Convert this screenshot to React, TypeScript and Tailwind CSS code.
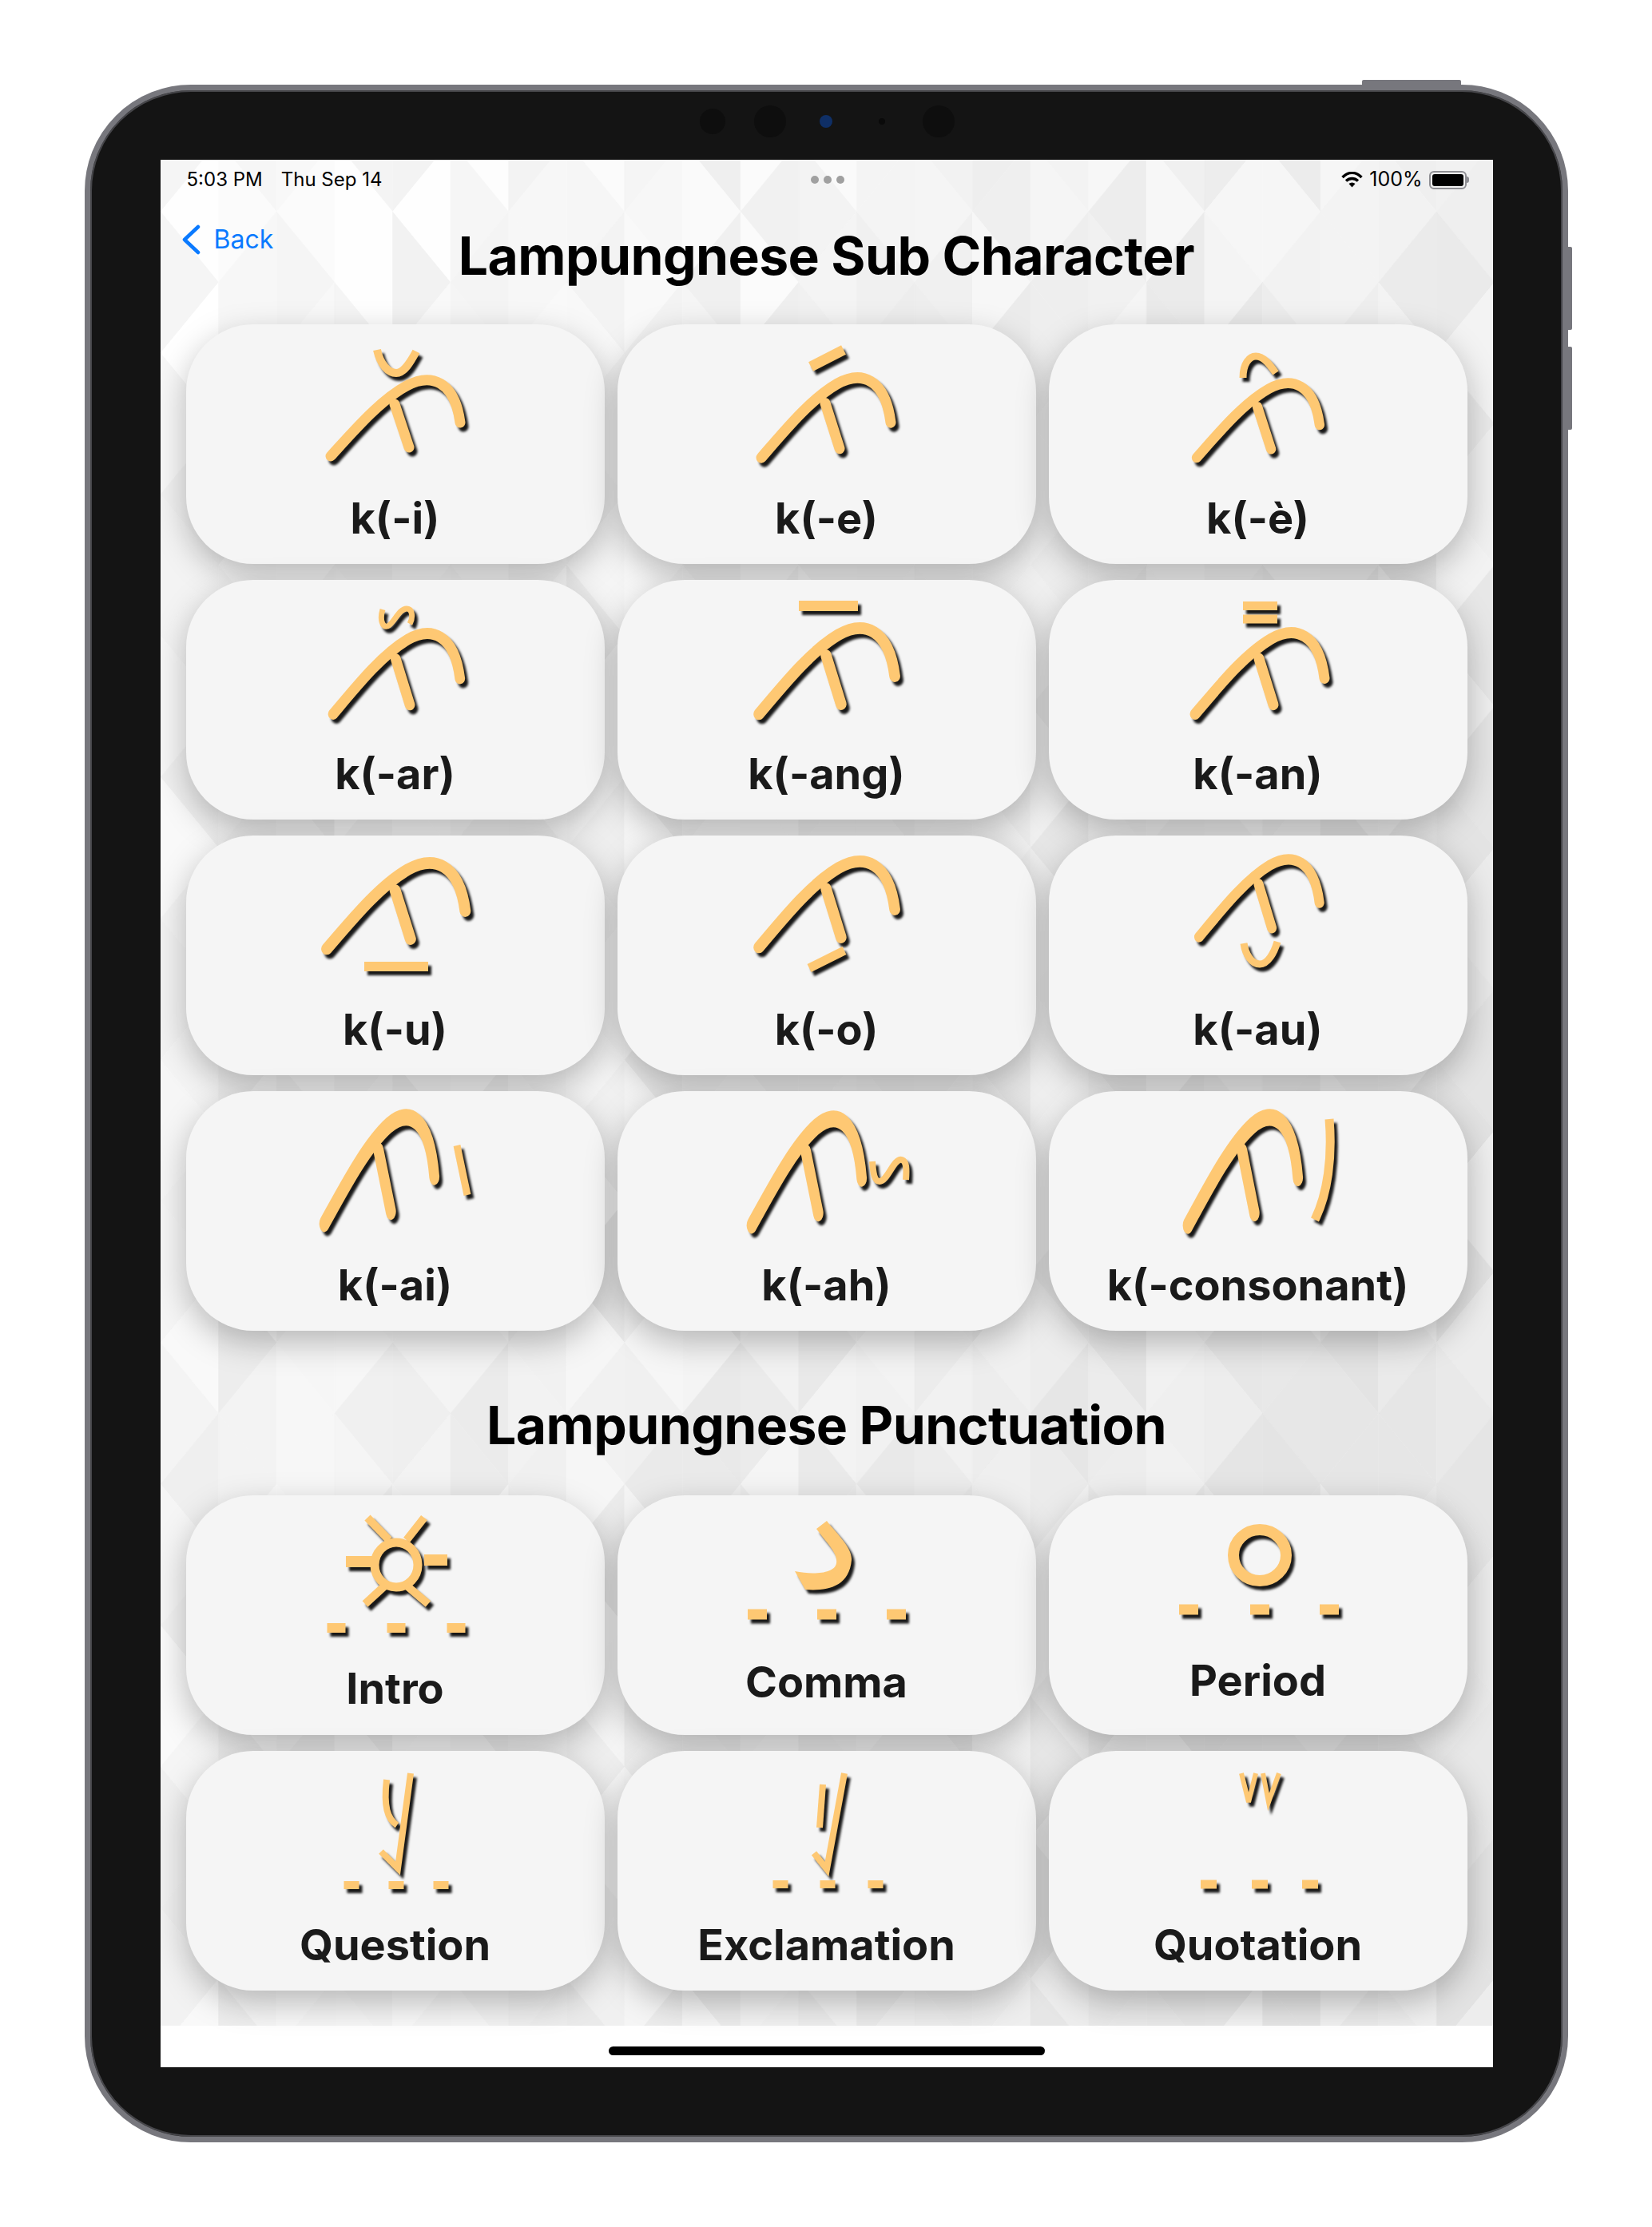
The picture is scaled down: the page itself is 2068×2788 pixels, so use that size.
import type { ReactNode } from 'react';

const INK = '#fec873';

// Low-poly wallpaper: a lattice of diamonds, each split down its middle
function hash(a: number, b: number) {
  const s = Math.sin(a * 127.1 + b * 311.7) * 43758.5453;
  return s - Math.floor(s);
}

function Wallpaper() {
  const w = 72.6;
  const h = 88.5;
  const tris: { points: string; fill: string }[] = [];
  for (let j = -2; j < 30; j++) {
    for (let i = -1; i < 25; i++) {
      if ((i + j + 200) % 2 === 0) continue;
      const cx = i * w;
      const cy = 65 + j * h;
      [-1, 1].forEach((side) => {
        const shade =
          251 - 12 * (cx / 1668) - 7 * Math.min(1, Math.max(0, cy / 900)) + (hash(i + side * 0.3, j) - 0.5) * 13;
        const v = Math.min(255, Math.round(shade));
        tris.push({
          points: `${cx},${cy - h} ${cx + side * w},${cy} ${cx},${cy + h}`,
          fill: `rgb(${v},${v},${v})`,
        });
      });
    }
  }
  return (
    <svg className="absolute inset-0 w-full h-full" viewBox="0 0 1668 2336" preserveAspectRatio="none">
      {tris.map((t, n) => (
        <polygon key={n} points={t.points} fill={t.fill} stroke={t.fill} strokeWidth="0.5" />
      ))}
    </svg>
  );
}

// Base letter "ka"; marks are passed in relative to the start of its long stroke
function Ka({ x, y, sx, sy, weight = 13, children }: { x: number; y: number; sx: number; sy: number; weight?: number; children?: ReactNode }) {
  return (
    <g transform={`translate(${x} ${y})`}>
      <g transform={`scale(${sx} ${sy})`} strokeWidth={weight} strokeLinecap="round">
        <path d="M0 0 C30 -33 62 -70 95 -88 C125 -104 155 -95 162 -42" />
        <path d="M80 -65 L98 -11" />
      </g>
      {children}
    </g>
  );
}

function Dots({ xs, y, w, h }: { xs: number[]; y: number; w: number; h: number }) {
  return (
    <g fill={INK} stroke="none">
      {xs.map((x) => (
        <rect key={x} x={x - w / 2} y={y - h / 2} width={w} height={h} />
      ))}
    </g>
  );
}

const letters: { label: string; glyph: ReactNode }[] = [
  {
    label: 'k(-i)',
    glyph: (
      <Ka x={181} y={165} sx={1} sy={1}>
        <path d="M58 -133 C62 -115 72 -104 82 -104 C92 -104 100 -118 107 -131" strokeWidth="10" />
      </Ka>
    ),
  },
  {
    label: 'k(-e)',
    glyph: (
      <Ka x={180} y={167} sx={1} sy={1.05}>
        <path d="M62 -114 L103 -135" strokeWidth="13" />
      </Ka>
    ),
  },
  {
    label: 'k(-è)',
    glyph: (
      <Ka x={185} y={167} sx={0.95} sy={0.98}>
        <path d="M58 -100 C58 -118 66 -127 74 -127 C84 -127 92 -116 99 -106" strokeWidth="9" />
      </Ka>
    ),
  },
  {
    label: 'k(-ar)',
    glyph: (
      <Ka x={184} y={168} sx={0.98} sy={1.06}>
        <path d="M62 -131 C58 -118 62 -108 68 -110 C76 -113 82 -132 92 -132 C100 -132 100 -120 96 -113" strokeWidth="7" />
      </Ka>
    ),
  },
  {
    label: 'k(-ang)',
    glyph: (
      <Ka x={177} y={168} sx={1.05} sy={1.13}>
        <path d="M50 -135.5 H124" strokeWidth="13" />
      </Ka>
    ),
  },
  {
    label: 'k(-an)',
    glyph: (
      <Ka x={183} y={168} sx={1} sy={1.07}>
        <path d="M60 -135.5 H103 M60 -119 H103" strokeWidth="11" />
      </Ka>
    ),
  },
  {
    label: 'k(-u)',
    glyph: (
      <Ka x={176} y={142} sx={1.07} sy={1.13}>
        <path d="M47 22 H127" strokeWidth="12" />
      </Ka>
    ),
  },
  {
    label: 'k(-o)',
    glyph: (
      <Ka x={177} y={140} sx={1.05} sy={1.13}>
        <path d="M63 26 L107 4" strokeWidth="11" />
      </Ka>
    ),
  },
  {
    label: 'k(-au)',
    glyph: (
      <Ka x={188} y={127} sx={0.93} sy={1.02}>
        <path d="M56 8 C58 22 66 34 76 34 C86 34 94 20 98 6" strokeWidth="9" />
      </Ka>
    ),
  },
  {
    label: 'k(-ai)',
    glyph: (
      <Ka x={173} y={166} sx={0.85} sy={1.4} weight={15}>
        <path d="M166 -98 L179 -36" strokeWidth="9" />
      </Ka>
    ),
  },
  {
    label: 'k(-ah)',
    glyph: (
      <Ka x={168} y={168} sx={0.85} sy={1.4} weight={15}>
        <path d="M151 -80 C152 -65 154 -55 160 -55 C170 -55 178 -85 188 -82 C194 -80 194 -70 193 -57" strokeWidth="8" />
      </Ka>
    ),
  },
  {
    label: 'k(-consonant)',
    glyph: (
      <Ka x={174} y={168} sx={0.85} sy={1.42} weight={15}>
        <path d="M177 -133 C181 -85 175 -40 159 -7" strokeWidth="11" />
      </Ka>
    ),
  },
];

const marks: { label: string; gap: string; glyph: ReactNode }[] = [
  {
    label: 'Intro',
    gap: 'mt-[14px]',
    glyph: (
      <>
        <ellipse cx="263" cy="87" rx="27" ry="28" strokeWidth="11" />
        <path d="M227 28 L254 56 M298 28 L276 56 M224 136 L249 113 M303 136 L276 113" strokeWidth="10" />
        <path d="M200 83 H233 M327 81 H298" strokeWidth="14" />
        <Dots xs={[188, 263, 338]} y={166} w={23} h={12} />
      </>
    ),
  },
  {
    label: 'Comma',
    gap: 'mt-[6px]',
    glyph: (
      <>
        <path d="M262 32 L249 42 C262 60 276 72 274 85 C272 98 245 100 222 95 L235 118 C262 120 290 115 293 81 C294 65 274 48 262 32 Z" fill={INK} stroke="none" />
        <Dots xs={[175, 262, 349]} y={149} w={24} h={13} />
      </>
    ),
  },
  {
    label: 'Period',
    gap: 'mt-[4px]',
    glyph: (
      <>
        <ellipse cx="264" cy="75" rx="33" ry="32" strokeWidth="14" />
        <Dots xs={[175, 264, 351]} y={143} w={24} h={13} />
      </>
    ),
  },
  {
    label: 'Question',
    gap: 'mt-[15px]',
    glyph: (
      <>
        <path d="M281 28 L265 147 L244 126" strokeWidth="8" />
        <path d="M251 36 C247 70 252 85 264 93" strokeWidth="8" />
        <Dots xs={[207, 263, 319]} y={168} w={19} h={10} />
      </>
    ),
  },
  {
    label: 'Exclamation',
    gap: 'mt-[15px]',
    glyph: (
      <>
        <path d="M284 28 L262 148 L246 128" strokeWidth="8" />
        <path d="M257 42 L253 96" strokeWidth="8" />
        <Dots xs={[204, 263, 323]} y={167} w={19} h={10} />
      </>
    ),
  },
  {
    label: 'Quotation',
    gap: 'mt-[15px]',
    glyph: (
      <>
        <path d="M241 28 L250 64 L259 28 M268 28 L275 64 L288 28" strokeWidth="6" />
        <Dots xs={[200, 264, 327]} y={167} w={20} h={11} />
      </>
    ),
  },
];

function Card({ label, glyph, gap = 'mt-[15px]' }: { label: string; glyph: ReactNode; gap?: string }) {
  return (
    <div className="flex flex-col items-center h-[300px] rounded-[84px] bg-[#f5f5f5] shadow-[0_14px_40px_rgba(0,0,0,0.26)]">
      <svg
        viewBox="0 0 524 200"
        className="w-[524px] h-[200px] shrink-0 drop-shadow-[4px_5px_1.5px_rgba(0,0,0,0.9)]"
        fill="none"
        stroke={INK}
      >
        {glyph}
      </svg>
      <span className={`${gap} text-[54px] leading-[56px] font-bold text-[#1a1a1a]`}>{label}</span>
    </div>
  );
}

function StatusBar() {
  return (
    <div className="grid grid-cols-3 items-center h-[50px] pl-[33px] pr-[30px] text-[24px] text-black">
      <div className="flex gap-[23px]">
        <span>5:03 PM</span>
        <span>Thu Sep 14</span>
      </div>
      <div className="flex justify-center gap-[6px]">
        <div className="w-[10px] h-[10px] rounded-full bg-[#a0a0a0]" />
        <div className="w-[10px] h-[10px] rounded-full bg-[#a0a0a0]" />
        <div className="w-[10px] h-[10px] rounded-full bg-[#a0a0a0]" />
      </div>
      <div className="flex items-center justify-end gap-[8px]">
        <svg width="27" height="20" viewBox="0 0 27 20" fill="none" stroke="#000">
          <path d="M1.5 7 C9 -0.5 18 -0.5 25.5 7 M6 11.5 C10.5 7.5 16.5 7.5 21 11.5" strokeWidth="3.4" />
          <path d="M9.5 15 C12 13 15 13 17.5 15 L13.5 19.5 Z" fill="#000" stroke="none" />
        </svg>
        <span className="text-[25px]">100%</span>
        <div className="flex items-center">
          <div className="w-[47px] h-[23px] rounded-[6px] border-2 border-[#8e8e93] p-[2px]">
            <div className="w-full h-full rounded-[3px] bg-black" />
          </div>
          <div className="w-[3px] h-[8px] rounded-r-full bg-[#8e8e93]" />
        </div>
      </div>
    </div>
  );
}

export default function App() {
  return (
    <div className="w-[2068px] h-[2788px] bg-white pl-[106px] pt-[106px] font-['Inter',sans-serif]">
      <div className="relative w-[1857px] h-[2576px]">
        {/* hardware buttons poke out from behind the frame */}
        <div className="absolute left-[1599px] top-[-6px] w-[124px] h-[8px] rounded-t-[2px] bg-[#77777d]" />
        <div className="absolute left-[1855px] top-[203px] w-[7px] h-[104px] rounded-r-[2px] bg-[#77777d]" />
        <div className="absolute left-[1855px] top-[328px] w-[7px] h-[104px] rounded-r-[2px] bg-[#77777d]" />

        <div className="relative w-full h-full flex items-center justify-center rounded-[133px] border-[7px] border-[#77777d] bg-[#141414] shadow-[inset_0_0_0_2px_#46464a]">
          {/* camera cluster */}
          <div className="absolute left-[763px] top-[23px] w-[32px] h-[32px] rounded-full bg-[#0e0e0e]" />
          <div className="absolute left-[831px] top-[19px] w-[40px] h-[40px] rounded-full bg-[#0e0e0e]" />
          <div className="absolute left-[913px] top-[31px] w-[16px] h-[16px] rounded-full bg-[#0f2f66]" />
          <div className="absolute left-[987px] top-[35px] w-[8px] h-[8px] rounded-full bg-[#0a0a0a]" />
          <div className="absolute left-[1042px] top-[19px] w-[40px] h-[40px] rounded-full bg-[#0e0e0e]" />

          <div className="w-[1668px] h-[2388px] flex flex-col bg-white overflow-hidden">
            <div className="relative h-[2336px] shrink-0">
              <Wallpaper />
              <div className="relative">
                <StatusBar />
                <div className="grid grid-cols-[1fr_auto_1fr] h-[156px]">
                  <div className="flex items-center gap-[17px] h-[40px] mt-[30px] pl-[27px] text-[#0a7aff] text-[32px]">
                    <svg width="23" height="38" viewBox="0 0 23 38" fill="none" stroke="#0a7aff" strokeWidth="4.5" strokeLinecap="round" strokeLinejoin="round">
                      <path d="M20 3 L3 19 L20 35" />
                    </svg>
                    <span>Back</span>
                  </div>
                  <h1 className="pt-[30px] text-[66px] leading-[80px] font-bold tracking-[-0.6px] text-black">Lampungnese Sub Character</h1>
                </div>
                <div className="grid grid-cols-3 gap-x-[16px] gap-y-[20px] px-[32px]">
                  {letters.map((c) => (
                    <Card key={c.label} label={c.label} glyph={c.glyph} />
                  ))}
                </div>
                <h2 className="h-[206px] pt-[78px] text-center text-[66px] leading-[80px] font-bold tracking-[-0.6px] text-black">Lampungnese Punctuation</h2>
                <div className="grid grid-cols-3 gap-x-[16px] gap-y-[20px] px-[32px]">
                  {marks.map((c) => (
                    <Card key={c.label} label={c.label} glyph={c.glyph} gap={c.gap} />
                  ))}
                </div>
              </div>
            </div>
            <div className="flex-1 flex justify-center pt-[26px]">
              <div className="w-[546px] h-[11px] rounded-full bg-black" />
            </div>
          </div>
        </div>
      </div>
    </div>
  );
}
